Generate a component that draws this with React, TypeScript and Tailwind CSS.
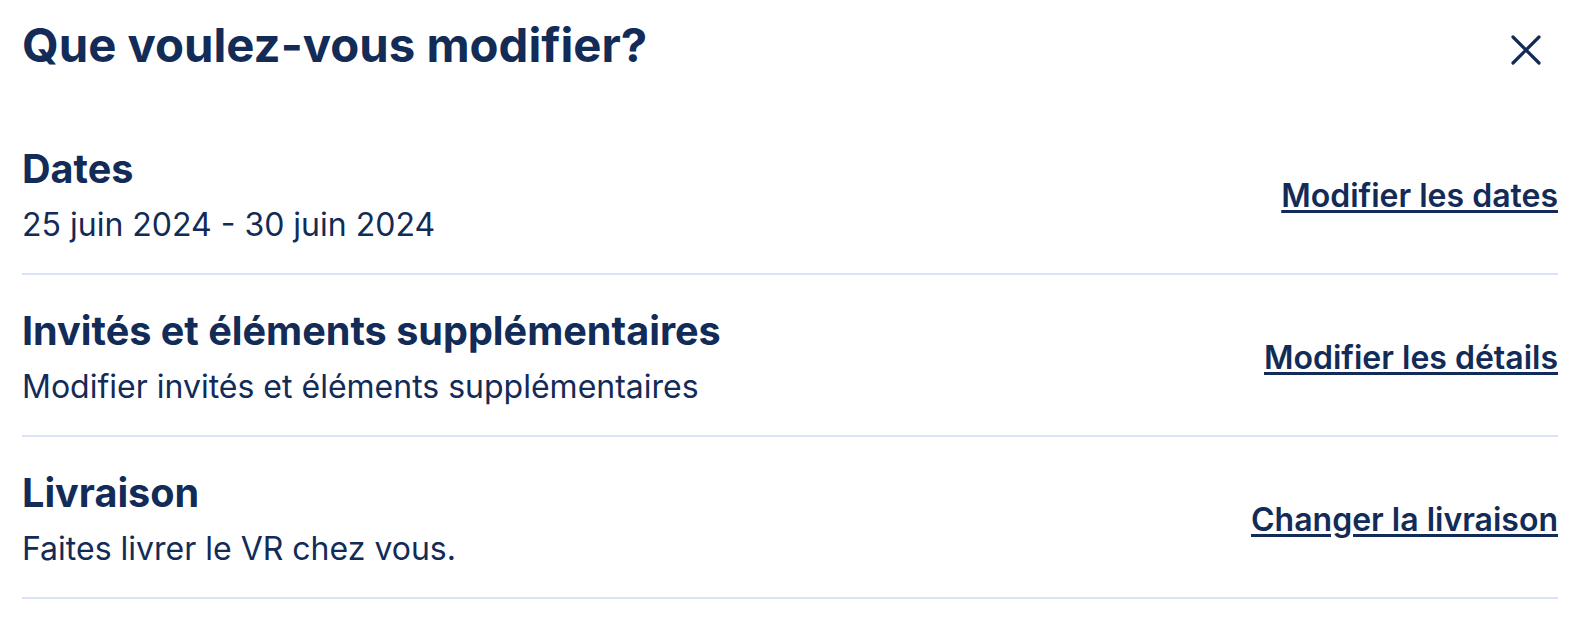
type Option = {
  title: string;
  description: string;
  action: string;
};

const options: Option[] = [
  {
    title: "Dates",
    description: "25 juin 2024 - 30 juin 2024",
    action: "Modifier les dates",
  },
  {
    title: "Invités et éléments supplémentaires",
    description: "Modifier invités et éléments supplémentaires",
    action: "Modifier les détails",
  },
  {
    title: "Livraison",
    description: "Faites livrer le VR chez vous.",
    action: "Changer la livraison",
  },
];

export default function App() {
  return (
    <div className="min-h-screen bg-white font-['Inter',sans-serif] text-[#122b57]">
      <div className="pl-[22px] pr-6 pt-4">
        <div className="flex items-start justify-between">
          <h1 className="text-[47.3px] font-bold leading-[58px]">
            Que voulez-vous modifier?
          </h1>
          <button
            type="button"
            aria-label="Fermer"
            className="mr-[17px] mt-[19px] flex h-[30px] w-[30px] items-center justify-center text-[#122b57]"
          >
            <svg
              width="30"
              height="30"
              viewBox="0 0 30 30"
              fill="none"
              stroke="currentColor"
              strokeWidth="3.2"
              strokeLinecap="round"
            >
              <path d="M2 2 L28 28 M28 2 L2 28" />
            </svg>
          </button>
        </div>
        <div className="mt-[39px]">
          {options.map((option, index) => (
            <div
              key={index}
              className="flex items-center justify-between border-b-2 border-[#d9e3fa] pb-[27px] pt-8"
            >
              <div className="flex flex-col">
                <h2 className="text-[39.6px] font-bold leading-[48px]">
                  {option.title}
                </h2>
                <p className="mt-[11px] text-[32px] leading-[42px]">
                  {option.description}
                </p>
              </div>
              <a
                href="#"
                className="text-[32px] font-semibold leading-[42px] underline decoration-[3px] underline-offset-[3px]"
              >
                {option.action}
              </a>
            </div>
          ))}
        </div>
      </div>
    </div>
  );
}
